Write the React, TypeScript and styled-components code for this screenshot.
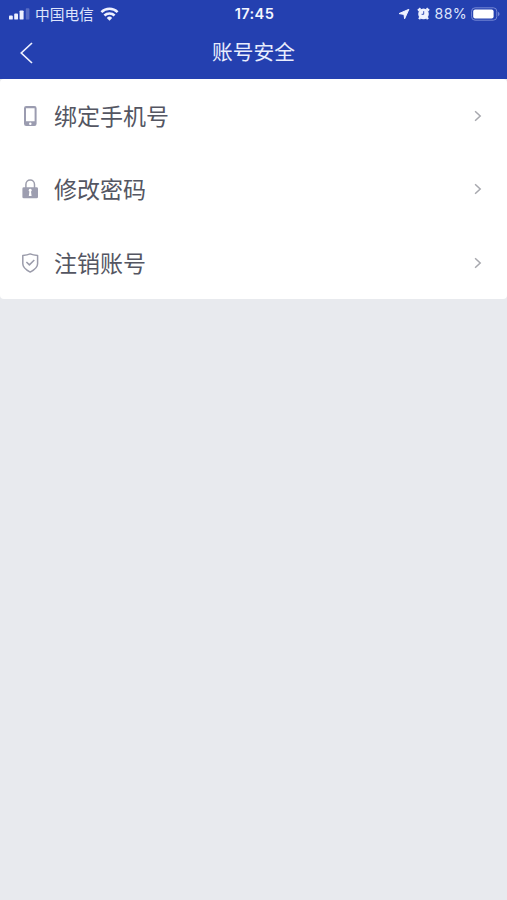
import React from 'react';
import styled, { createGlobalStyle } from 'styled-components';

const GlobalStyle = createGlobalStyle`
  * { box-sizing: border-box; }
  body {
    margin: 0;
    background: #e8eaee;
    font-family: Inter, "Noto Sans CJK SC", sans-serif;
  }
`;

const Screen = styled.div`
  min-height: 100vh;
  background: #e8eaee;
`;

const Header = styled.header`
  height: 79px;
  background: #2440b0;
  color: #fff;
`;

const StatusBar = styled.div`
  display: grid;
  grid-template-columns: 1fr auto 1fr;
  align-items: center;
  height: 27px;
  padding: 0 7px 0 9px;
`;

const StatusGroup = styled.div<{ $end?: boolean }>`
  display: flex;
  align-items: center;
  justify-content: ${(p) => (p.$end ? 'flex-end' : 'flex-start')};
  color: #eef1ff;

  svg { display: block; flex: none; }
`;

const StatusIcons = styled.span`
  display: flex;
  align-items: center;
  gap: 7px;
`;

const Carrier = styled.span`
  margin: 0 6px 0 5px;
  font: 400 14.7px/26px "Noto Sans CJK SC", sans-serif;
  color: #dfe5fc;
`;

const Clock = styled.time`
  padding-top: 2px;
  font-size: 14.6px;
  font-weight: 600;
  line-height: 25px;
  letter-spacing: 0.4px;
  color: #f4f6ff;
`;

const Percent = styled.span`
  margin: 0 4px 0 5px;
  font-size: 14.2px;
  line-height: 27px;
  letter-spacing: 0.3px;
  color: #dfe5fc;
`;

const NavBar = styled.div`
  display: grid;
  grid-template-columns: 60px 1fr 60px;
  align-items: center;
  height: 50px;
`;

const BackButton = styled.button`
  display: flex;
  align-items: center;
  height: 50px;
  padding: 2px 0 0 20px;
  border: 0;
  background: none;
  color: #eef1ff;
`;

const Title = styled.h1`
  margin: 0;
  padding-bottom: 2px;
  text-align: center;
  font: 400 20.7px/48px "Noto Sans CJK SC", sans-serif;
  color: #e9edfd;
`;

const Menu = styled.ul`
  display: grid;
  grid-template-rows: 73px 74px 73px;
  margin: 0;
  padding: 0;
  list-style: none;
  background: #fff;
  border-radius: 4px;
  overflow: hidden;
`;

const MenuItem = styled.li`
  display: grid;
  grid-template-columns: 18px 1fr 8px;
  column-gap: 15px;
  align-items: center;
  padding: 0 25px 0 21px;

  svg { display: block; }
`;

const Label = styled.span`
  padding-bottom: 2px;
  font: 400 23px/34px "Noto Sans CJK SC", sans-serif;
  color: #545662;
`;

const SignalIcon = () => (
  <svg width="21" height="12" viewBox="0 0 21 12" fill="currentColor">
    <rect x="0" y="7.6" width="3.8" height="4" rx="0.9" />
    <rect x="5.2" y="5.6" width="3.8" height="6" rx="0.9" />
    <rect x="10.6" y="2.4" width="4" height="9.2" rx="0.9" />
    <rect x="16.8" y="0.2" width="3.6" height="11.4" rx="0.9" opacity="0.25" />
  </svg>
);

const WifiIcon = () => (
  <svg width="19" height="14" viewBox="0 0 18 14" fill="none" stroke="currentColor" strokeWidth="2.5">
    <path d="M0.9 5.1a11.5 11.5 0 0 1 16.2 0" />
    <path d="M3.9 8.5a7.2 7.2 0 0 1 10.2 0" />
    <path d="M9 13.7l-2.7-2.8a3.8 3.8 0 0 1 5.4 0z" fill="currentColor" stroke="none" />
  </svg>
);

const LocationIcon = () => (
  <svg width="12" height="12" viewBox="0 0 12 12" fill="currentColor" stroke="currentColor" strokeWidth="1" strokeLinejoin="round">
    <path d="M10.9 1.3L1 5.6l5 .8.6 4.4z" />
  </svg>
);

const AlarmIcon = () => (
  <svg width="13" height="13" viewBox="0 0 13 13">
    <circle cx="6.5" cy="6.9" r="5.3" fill="currentColor" />
    <path d="M1 3.6L3.6 1.4M12 3.6L9.4 1.4M3.2 10.4l-1.1 1.7M9.8 10.4l1.1 1.7" fill="none" stroke="currentColor" strokeWidth="2.2" />
    <path d="M6.7 4.2v3.1H4.6" fill="none" stroke="#2440b0" strokeWidth="0.9" />
  </svg>
);

const BatteryIcon = () => (
  <svg width="29" height="14" viewBox="0 0 29 14">
    <rect x="0.6" y="0.8" width="25.2" height="12.4" rx="3.5" fill="none" stroke="#7587d4" strokeWidth="1" />
    <rect x="2.2" y="2.5" width="20.4" height="9" rx="2" fill="#fff" />
    <path d="M27 4.8q1.6.8 1.6 2.2t-1.6 2.2z" fill="#7587d4" />
  </svg>
);

const BackIcon = () => (
  <svg width="13" height="22" viewBox="0 0 13 22" fill="none" stroke="currentColor" strokeWidth="1.7">
    <path d="M12 1L1.3 11 12 21" />
  </svg>
);

const PhoneIcon = () => (
  <svg width="18" height="22" viewBox="0 0 18 22">
    <path
      fillRule="evenodd"
      fill="#9b9cb0"
      d="M5.2 1h8.2a2.2 2.2 0 0 1 2.2 2.2v15.6a2.2 2.2 0 0 1-2.2 2.2H5.2A2.2 2.2 0 0 1 3 18.8V3.2A2.2 2.2 0 0 1 5.2 1zM5 3.3v13h8.6v-13zM9.3 17.4a1.25 1.25 0 1 0 0 2.5a1.25 1.25 0 0 0 0-2.5z"
    />
  </svg>
);

const LockIcon = () => (
  <svg width="18" height="22" viewBox="0 0 18 22">
    <path d="M4.9 10V6.4a4.3 4.3 0 0 1 8.6 0V10" fill="none" stroke="#9d9eac" strokeWidth="1.5" />
    <rect x="1.4" y="9.3" width="15.6" height="11" rx="1.4" fill="#9d9eb0" />
    <path d="M9.2 10.8a1.5 1.5 0 0 1 .8 2.8l.6 4.4H7.8l.6-4.4a1.5 1.5 0 0 1 .8-2.8z" fill="#fff" />
  </svg>
);

const ShieldIcon = () => (
  <svg width="18" height="22" viewBox="0 0 18 22" fill="none" stroke="#9b9cab" strokeWidth="1.5" strokeLinejoin="round">
    <path d="M9.2 1.9c2 .9 4.4 1.4 7.4 1.6v8.3c0 4.2-4.3 6.7-7.4 8.3-3.1-1.6-7.4-4.1-7.4-8.3V3.5c3-.2 5.4-.7 7.4-1.6z" />
    <path d="M5.4 10l3 2.9 4.9-4.9" />
  </svg>
);

const ChevronIcon = () => (
  <svg width="8" height="12" viewBox="0 0 8 12" fill="none" stroke="#a7a8ae" strokeWidth="1.5">
    <path d="M1.1 1.2L6.2 6l-5.1 4.8" />
  </svg>
);

const items = [
  { label: '绑定手机号', Icon: PhoneIcon },
  { label: '修改密码', Icon: LockIcon },
  { label: '注销账号', Icon: ShieldIcon },
];

export default function App() {
  return (
    <Screen>
      <GlobalStyle />
      <Header>
        <StatusBar>
          <StatusGroup>
            <SignalIcon />
            <Carrier>中国电信</Carrier>
            <WifiIcon />
          </StatusGroup>
          <Clock>17:45</Clock>
          <StatusGroup $end>
            <StatusIcons>
              <LocationIcon />
              <AlarmIcon />
            </StatusIcons>
            <Percent>88%</Percent>
            <BatteryIcon />
          </StatusGroup>
        </StatusBar>
        <NavBar>
          <BackButton aria-label="返回">
            <BackIcon />
          </BackButton>
          <Title>账号安全</Title>
        </NavBar>
      </Header>
      <Menu>
        {items.map(({ label, Icon }) => (
          <MenuItem key={label}>
            <Icon />
            <Label>{label}</Label>
            <ChevronIcon />
          </MenuItem>
        ))}
      </Menu>
    </Screen>
  );
}
